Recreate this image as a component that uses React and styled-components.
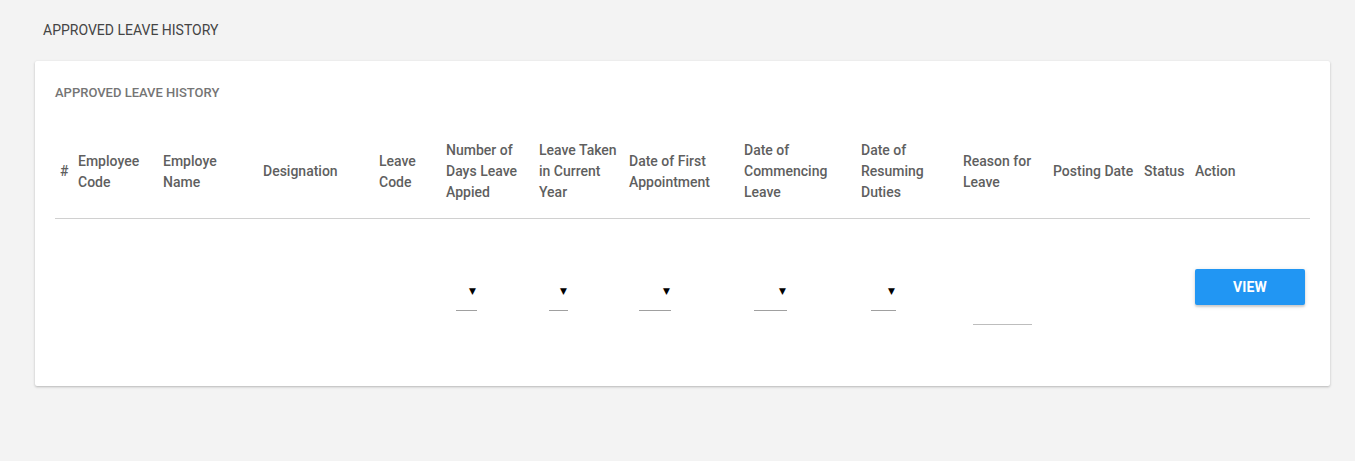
import React from "react";
import styled, { createGlobalStyle } from "styled-components";

const GlobalStyle = createGlobalStyle`
  html, body {
    margin: 0;
    padding: 0;
    background: #f3f3f3;
    font-family: Roboto, "Liberation Sans", Arial, sans-serif;
  }
  *, *::before, *::after {
    box-sizing: border-box;
  }
`;

const columns = [
  { key: "no", lines: ["#"], width: 18 },
  { key: "code", lines: ["Employee", "Code"], width: 85 },
  { key: "name", lines: ["Employe", "Name"], width: 100 },
  { key: "designation", lines: ["Designation"], width: 116 },
  { key: "leaveCode", lines: ["Leave", "Code"], width: 67 },
  { key: "days", lines: ["Number of", "Days Leave", "Appied"], width: 93, select: 21 },
  { key: "taken", lines: ["Leave Taken", "in Current", "Year"], width: 90, select: 19 },
  { key: "first", lines: ["Date of First", "Appointment"], width: 115, select: 32 },
  { key: "commence", lines: ["Date of", "Commencing", "Leave"], width: 117, select: 33 },
  { key: "resume", lines: ["Date of", "Resuming", "Duties"], width: 102, select: 25 },
  { key: "reason", lines: ["Reason for", "Leave"], width: 90, input: 59 },
  { key: "posting", lines: ["Posting Date"], width: 91 },
  { key: "status", lines: ["Status"], width: 51 },
  { key: "action", lines: ["Action"], width: 120, button: true },
];

const Page = styled.div`
  padding: 22px 25px 60px 35px;
`;

const PageTitle = styled.h2`
  margin: 0 0 23px 8px;
  font-size: 14px;
  line-height: 16px;
  font-weight: 400;
  color: #444;
  text-transform: uppercase;
`;

const Card = styled.section`
  background: #fff;
  border-radius: 2px;
  box-shadow: 0 1px 3px rgba(0, 0, 0, 0.16), 0 1px 2px rgba(0, 0, 0, 0.1);
  padding: 25px 20px 19px 20px;
`;

const CardTitle = styled.h3`
  margin: 0 0 24px 0;
  font-size: 13px;
  line-height: 14px;
  font-weight: 500;
  color: #757575;
  text-transform: uppercase;
`;

const Table = styled.table`
  width: 100%;
  table-layout: fixed;
  border-collapse: collapse;
`;

const HeadCell = styled.th`
  width: ${(p) => p.$width}px;
  padding: 16px 0 15px 5px;
  text-align: left;
  vertical-align: middle;
  white-space: nowrap;
  font-size: 14px;
  line-height: 21px;
  font-weight: 500;
  color: #5f5f5f;
  border-bottom: 1px solid #d0d0d0;
`;

const Cell = styled.td`
  padding: 50px 0 42px 5px;
  vertical-align: top;
  height: 40px;
`;

const SelectBox = styled.div`
  position: relative;
  width: ${(p) => p.$width}px;
  height: 24px;
  margin: 18px 0 0 10px;
  border-bottom: 1px solid #a0a0a0;
`;

const Caret = styled.span`
  position: absolute;
  right: 1px;
  top: -1px;
  font-size: 9px;
  line-height: 10px;
  color: #000;
  font-family: "DejaVu Sans", sans-serif;
`;

const TextInput = styled.div`
  width: ${(p) => p.$width}px;
  height: 30px;
  margin: 26px 0 0 10px;
  border-bottom: 1px solid #bdbdbd;
`;

const ViewButton = styled.button`
  width: 110px;
  height: 36px;
  border: none;
  border-radius: 2px;
  background: #2196f3;
  color: #fff;
  font-family: Roboto, "Liberation Sans", Arial, sans-serif;
  font-size: 14px;
  font-weight: 700;
  letter-spacing: 0.2px;
  text-transform: uppercase;
  box-shadow: 0 2px 2px rgba(0, 0, 0, 0.14), 0 1px 5px rgba(0, 0, 0, 0.12);
  cursor: pointer;
`;

const renderCell = (col) => {
  if (col.select) {
    return (
      <SelectBox $width={col.select}>
        <Caret>▼</Caret>
      </SelectBox>
    );
  }
  if (col.input) return <TextInput $width={col.input} />;
  if (col.button) return <ViewButton>View</ViewButton>;
  return null;
};

export default function App() {
  return (
    <Page>
      <GlobalStyle />
      <PageTitle>Approved Leave History</PageTitle>
      <Card>
        <CardTitle>Approved Leave History</CardTitle>
        <Table>
          <thead>
            <tr>
              {columns.map((col) => (
                <HeadCell key={col.key} $width={col.width}>
                  {col.lines.map((line, i) => (
                    <React.Fragment key={i}>
                      {i > 0 && <br />}
                      {line}
                    </React.Fragment>
                  ))}
                </HeadCell>
              ))}
            </tr>
          </thead>
          <tbody>
            <tr>
              {columns.map((col) => (
                <Cell key={col.key}>{renderCell(col)}</Cell>
              ))}
            </tr>
          </tbody>
        </Table>
      </Card>
    </Page>
  );
}
